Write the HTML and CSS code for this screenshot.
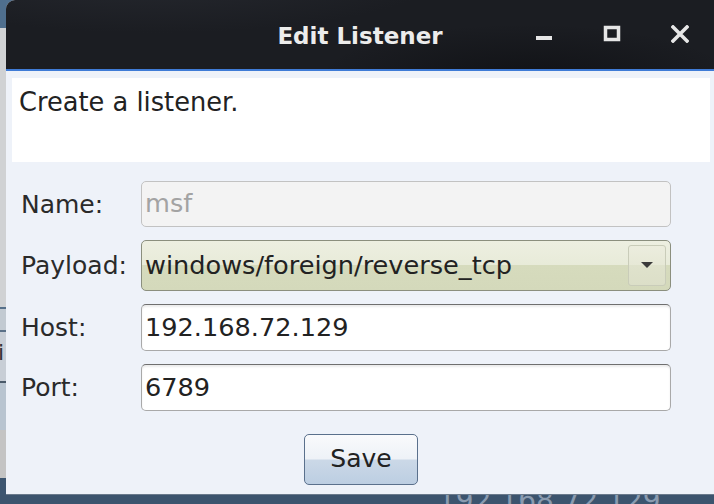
FILE: index.html
```html
<!DOCTYPE html>
<html>
<head>
<meta charset="utf-8">
<link rel="stylesheet" href="styles.css">
</head>
<body>
<div class="screen">
  <div class="top">
    <div class="strip"><span class="strip-i">i</span></div>
    <div class="dialog">
      <div class="titlebar">
        <div></div>
        <div class="title">Edit Listener</div>
        <div class="wbtns">
          <span class="wbtn"><svg width="18" height="18" viewBox="0 0 18 18"><rect x="1" y="11" width="16" height="4" fill="#e6e6e6"/></svg></span>
          <span class="wbtn"><svg width="18" height="18" viewBox="0 0 18 18"><rect x="2.5" y="2.5" width="13" height="12" fill="none" stroke="#e6e6e6" stroke-width="3.5"/></svg></span>
          <span class="wbtn"><svg width="18" height="18" viewBox="0 0 18 18"><path d="M2 2 L16 16 M16 2 L2 16" stroke="#e6e6e6" stroke-width="3.6" stroke-linecap="square"/></svg></span>
        </div>
      </div>
      <div class="content">
        <div class="desc">Create a listener.</div>
        <div class="form">
          <label class="lbl">Name:</label>
          <div class="field field-disabled f-name">msf</div>
          <label class="lbl">Payload:</label>
          <div class="field combo f-payload">
            <span class="combo-text">windows/foreign/reverse_tcp</span>
            <span class="combo-btn"><svg width="12" height="7" viewBox="0 0 12 7"><path d="M0 0 H12 L6 6 Z" fill="#3a3a3a"/></svg></span>
          </div>
          <label class="lbl">Host:</label>
          <div class="field field-text f-host">192.168.72.129</div>
          <label class="lbl">Port:</label>
          <div class="field field-text f-port">6789</div>
        </div>
        <div class="actions">
          <button class="btn">Save</button>
        </div>
      </div>
    </div>
  </div>
  <div class="bottom"><span class="bottom-text">192.168.72.129</span></div>
</div>
</body>
</html>
```
FILE: styles.css
```css
* { box-sizing: border-box; }
html, body { margin: 0; padding: 0; }
body {
  width: 714px;
  height: 504px;
  overflow: hidden;
  background: #3c546e;
  font-family: "DejaVu Sans", sans-serif;
  color: #222;
}
.screen { display: flex; flex-direction: column; width: 714px; height: 504px; }
.top {
  display: flex;
  height: 495px;
  background: linear-gradient(to bottom, #50708f 0, #50708f 28px, #d2d4d6 28px, #d2d4d6 100%);
}
.strip {
  width: 6px;
  flex: none;
  position: relative;
  background: linear-gradient(to bottom,
    #4f6f8e 0, #4f6f8e 28px,
    #d0d2d4 28px, #d0d2d4 307px,
    #56708a 307px, #56708a 309px,
    #c2cad2 309px, #c2cad2 330px,
    #5a7088 330px, #5a7088 332px,
    #c8ced6 332px, #c8ced6 381px,
    #4a5a6a 381px, #4a5a6a 383px,
    #b8c4d0 383px, #b8c4d0 430px,
    #c4c4c4 430px, #c4c4c4 478px,
    #3c5570 478px);
  overflow: hidden;
}
.strip-i {
  position: absolute;
  left: -2px;
  top: 340px;
  font-size: 22px;
  color: #333;
}
.dialog {
  flex: 1;
  display: flex;
  flex-direction: column;
  background: #eef2f9;
  border-top-left-radius: 9px;
  overflow: hidden;
  border-bottom: 1px solid #6a7a8c;
}
.titlebar {
  height: 71px;
  flex: none;
  display: grid;
  grid-template-columns: 1fr auto 1fr;
  align-items: center;
  background:
    radial-gradient(ellipse 420px 90px at 150px -30px, rgba(60,64,74,0.35), rgba(60,64,74,0) 70%),
    radial-gradient(ellipse 300px 80px at 520px 80px, rgba(10,11,14,0.6), rgba(10,11,14,0) 70%),
    #1b1d22;
  border-bottom: 2px solid #3f7bd6;
}
.title {
  color: #ececec;
  font-weight: bold;
  font-size: 23px;
  padding-top: 2px;
}
.wbtns { display: flex; justify-content: flex-end; align-self: stretch; align-items: center; }
.wbtn { width: 68px; display: flex; justify-content: center; align-items: center; padding-bottom: 2px; }
.content {
  flex: 1;
  display: flex;
  flex-direction: column;
  padding: 7px 4px 10px 6px;
}
.desc {
  background: #fff;
  height: 84px;
  padding: 10px 7px;
  font-size: 25.7px;
  line-height: 29px;
  color: #222;
}
.form {
  display: grid;
  grid-template-columns: 120px 530px;
  grid-template-rows: 46px 51px 47px 47px;
  row-gap: 13px;
  align-items: center;
  margin-top: 19px;
  padding-left: 9px;
}
.lbl { font-size: 25px; color: #2a2a2a; }
.field {
  height: 100%;
  border-radius: 5px;
  font-size: 25.6px;
  display: flex;
  align-items: center;
  padding-left: 3px;
  padding-bottom: 2px;
}
.field-disabled {
  background: #f3f3f3;
  border: 1.5px solid #c2c2c2;
  color: #a3a3a3;
}
.combo {
  background: linear-gradient(to bottom, #edefe1 0, #e8ebd9 48%, #d6dbbd 50%, #d4d9bb 100%);
  border: 1.5px solid #8b8f7e;
  color: #222;
  justify-content: space-between;
  padding-right: 4px;
}
.combo-btn {
  width: 38px;
  height: 41px;
  border: 1px solid #c9ccb9;
  border-radius: 3px;
  background: linear-gradient(to bottom, #ecedde 0, #e6e8d6 50%, #dfe2cc 50%, #dcdfc8 100%);
  display: flex;
  align-items: center;
  justify-content: center;
  margin-top: 2px;
}
.field-text {
  background: #fff;
  border: 1.5px solid #a9a9a9;
  border-top-color: #6f6f6f;
  box-shadow: inset 0 2px 2px rgba(0,0,0,0.08);
  color: #222;
}
.actions {
  display: flex;
  justify-content: center;
  margin-top: 23px;
}
.btn {
  width: 114px;
  height: 51px;
  border: 1.5px solid #5a708c;
  border-radius: 5px;
  background: linear-gradient(to bottom, #f9fafc 0, #eef2f7 48%, #cbd8e7 52%, #bccee2 100%);
  font-family: "DejaVu Sans", sans-serif;
  font-size: 25px;
  color: #222;
  padding: 0 0 2px 0;
}
.bottom {
  height: 9px;
  overflow: hidden;
  background: #3c546e;
  padding-left: 438px;
}
.bottom-text {
  display: block;
  font-size: 28px;
  line-height: 20px;
  margin-top: -4px;
  color: #8a9bb0;
}
```
